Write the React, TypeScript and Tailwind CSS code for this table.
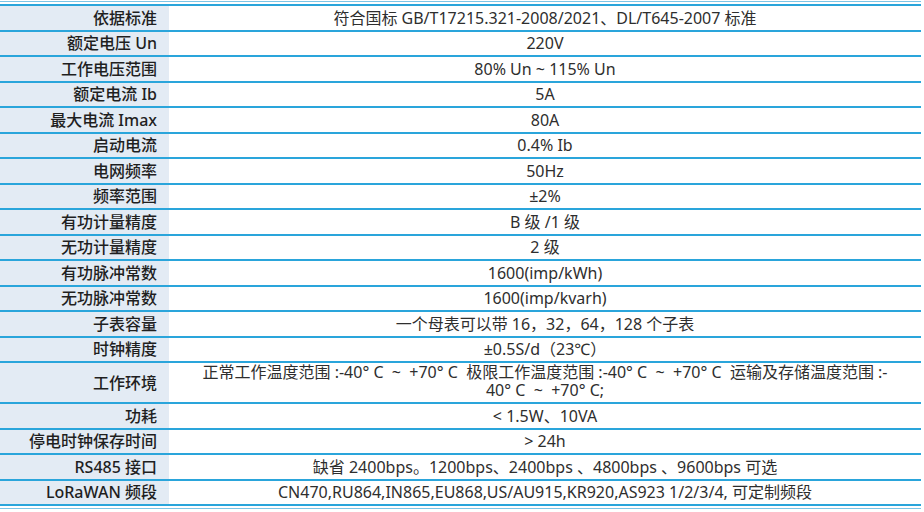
const rows: [string, string][] = [
  ["依据标准", "符合国标 GB/T17215.321-2008/2021、DL/T645-2007 标准"],
  ["额定电压 Un", "220V"],
  ["工作电压范围", "80% Un ~ 115% Un"],
  ["额定电流 Ib", "5A"],
  ["最大电流 Imax", "80A"],
  ["启动电流", "0.4% Ib"],
  ["电网频率", "50Hz"],
  ["频率范围", "±2%"],
  ["有功计量精度", "B 级 /1 级"],
  ["无功计量精度", "2 级"],
  ["有功脉冲常数", "1600(imp/kWh)"],
  ["无功脉冲常数", "1600(imp/kvarh)"],
  ["子表容量", "一个母表可以带 16，32，64，128 个子表"],
  ["时钟精度", "±0.5S/d（23℃）"],
  ["工作环境", ""],
  ["功耗", "< 1.5W、10VA"],
  ["停电时钟保存时间", "> 24h"],
  ["RS485 接口", "缺省 2400bps。1200bps、2400bps 、4800bps 、9600bps 可选"],
  ["LoRaWAN 频段", "CN470,RU864,IN865,EU868,US/AU915,KR920,AS923 1/2/3/4, 可定制频段"],
];

const range = "-40° C\u00a0\u00a0~\u00a0\u00a0+70° C";

const SpecRow = ({ label, value }: { label: string; value: string }) => {
  const isEnv = label === "工作环境";
  return (
    <div className={`flex border-b-2 border-[#2aa5db] ${isEnv ? "h-[41px]" : "h-[25.5px]"}`}>
      <div className="w-[169px] shrink-0 bg-[#e3ebf4] flex items-center justify-end pr-[12px] font-medium text-[#1f1f1f]">
        {label}
      </div>
      <div className="flex-1 flex items-center justify-center text-center text-[#2e2e2e]">
        {isEnv ? (
          <div className="-mt-[3px] leading-[18px]">
            <div className="whitespace-pre">
              {`正常工作温度范围 :${range}  极限工作温度范围 :${range}  运输及存储温度范围 :-`}
            </div>
            <div className="whitespace-pre">{"40° C\u00a0\u00a0~\u00a0\u00a0+70° C;"}</div>
          </div>
        ) : (
          value
        )}
      </div>
    </div>
  );
};

export default function App() {
  return (
    <div
      className="w-[924px] h-[512px] bg-white pt-[1px] text-[16px] leading-[20px]"
      style={{ fontFamily: '"Noto Sans", "Noto Sans CJK SC", sans-serif' }}
    >
      <div className="w-[921px] border-t border-[#7cc4e6] pt-[2px]">
        <div className="border-t-2 border-[#2aa5db]">
          {rows.map(([label, value]) => (
            <SpecRow key={label} label={label} value={value} />
          ))}
        </div>
        <div className="mt-[2px] border-t border-[#7cc4e6]" />
      </div>
    </div>
  );
}
